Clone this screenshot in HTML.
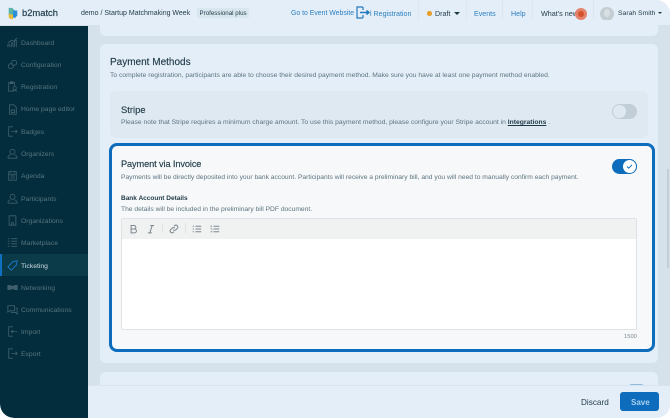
<!DOCTYPE html>
<html><head><meta charset="utf-8">
<style>
*{box-sizing:border-box;margin:0;padding:0}
html,body{width:670px;height:418px;overflow:hidden;background:#fff;font-family:"Liberation Sans",sans-serif}
#page{position:relative;width:670px;height:418px;overflow:hidden;background:#d6e2eb;border-radius:0 14px 14px 14px}
.a{position:absolute;white-space:nowrap}
#hdr{position:absolute;left:0;top:0;width:670px;height:26px;background:#e4eef8;border-bottom:1px solid #d5e2ec}
#side{position:absolute;left:0;top:26px;width:88px;height:392px;background:#032d3c;border-radius:0 0 0 14px}
.it{position:absolute;left:21px;font-size:6.800px;color:#56747f;line-height:10px;white-space:nowrap;margin-top:1px}
.ic{position:absolute;left:6.500px;width:11px;height:11px;fill:none;stroke:#3f5f6c;stroke-width:1}
.card{position:absolute;background:#e4eef8;border-radius:6px}
.nav{font-size:6.900px;line-height:10px;color:#2c7fc0}
.dk{color:#1f3a47}
.sub{font-size:6.700px;line-height:10px;color:#5d7482}
.tb{position:absolute;top:223.500px;width:10px;height:10px;fill:none;stroke:#7b888f;stroke-width:1.300}
.ttl{-webkit-text-stroke:.15px #1f3a47;color:#1f3a47;line-height:13px}
</style></head><body>
<div id="page">
<div id="hdr"></div>
<svg class="a" style="left:7px;top:7px" width="12" height="13" viewBox="0 0 14 15"><path d="M2 1h4l3 3v6H2z" fill="#57b6a8"/><path d="M7 4h5v6l-3 3-2-1z" fill="#2d8fd5"/><path d="M2 8l5 1v5H4l-2-2z" fill="#e9b93a"/></svg>
<div class="a" style="left:22px;top:7px;font-size:9.400px;line-height:12px;color:#1e3b49;-webkit-text-stroke:.2px #1e3b49">b2match</div>
<div class="a dk" style="left:81px;top:9px;font-size:7px;line-height:10px">demo / Startup Matchmaking Week</div>
<div class="a" style="left:197px;top:8px;width:52px;height:10px;background:#d8e6ee;border-radius:2px"></div>
<div class="a dk" style="left:199.500px;top:8.500px;font-size:6.200px;line-height:10px">Professional plus</div>
<div class="a nav" style="left:291px;top:9px">Go to Event Website</div>
<svg class="a" style="left:356px;top:6px" width="14" height="13" viewBox="0 0 14 13" fill="none" stroke="#2479ba" stroke-width="1.200"><path d="M7 1H1v11h6M7 1v3M7 12V9"/><path d="M4 6.500h9M10.500 4.500l2.500 2-2.500 2" stroke-width="1.500"/></svg>
<div class="a nav" style="left:370px;top:9px;font-size:7.100px">l Registration</div>
<div class="a" style="left:418px;top:0;width:1px;height:25px;background:#dbe7f1"></div>
<div class="a" style="left:427px;top:11px;width:4.500px;height:4.500px;border-radius:50%;background:#e8a02c"></div>
<div class="a dk" style="left:435px;top:9px;font-size:7.100px;line-height:10px">Draft</div>
<div class="a" style="left:454px;top:12px;border:3px solid transparent;border-top:3px solid #1f3a47"></div>
<div class="a" style="left:502px;top:0;width:1px;height:25px;background:#dbe7f1"></div>
<div class="a" style="left:466px;top:0;width:1px;height:25px;background:#dbe7f1"></div>
<div class="a nav" style="left:474px;top:9px;font-size:7.100px">Events</div>
<div class="a nav" style="left:511px;top:9px;font-size:7.100px">Help</div>
<div class="a" style="left:532px;top:0;width:1px;height:25px;background:#dbe7f1"></div>
<div class="a" style="left:593px;top:0;width:1px;height:25px;background:#dbe7f1"></div>
<div class="a dk" style="left:541px;top:9px;font-size:7.200px;line-height:10px">What's new</div>
<div class="a" style="left:575px;top:8px;width:12px;height:12px;border-radius:50%;background:#e3836b"></div>
<div class="a" style="left:578px;top:11px;width:6px;height:6px;border-radius:50%;background:#d4502f"></div>
<div class="a" style="left:600px;top:6.500px;width:14px;height:14px;border-radius:50%;background:#c3cdd2"></div>
<div class="a" style="left:604px;top:9px;width:6px;height:8px;border-radius:50%;background:#d9e0e4"></div>
<div class="a dk" style="left:618px;top:9px;font-size:6.800px;line-height:10px">Sarah Smith</div>
<div class="a" style="left:658px;top:12px;border:2.800px solid transparent;border-top:2.800px solid #1f3a47"></div>

<div id="side"></div>
<div class="a" style="left:0;top:254px;width:88px;height:22px;background:#0b3a49"></div>
<div class="a" style="left:0;top:254px;width:2px;height:22px;background:#0f6fc0"></div>
<svg class="ic" style="top:37px" viewBox="0 0 13 13"><path d="M1 12V9h2v3M5 12V7h2v5M9 12V4h2v8M1 7l4-3 3 1 4-4"/></svg>
<div class="it" style="top:38px">Dashboard</div>
<svg class="ic" style="top:59px" viewBox="0 0 13 13"><circle cx="4.500" cy="8.500" r="3"/><circle cx="8.500" cy="4.500" r="3"/></svg>
<div class="it" style="top:60px">Configuration</div>
<svg class="ic" style="top:81px" viewBox="0 0 13 13"><path d="M8 12H2V2h7v4M4 1h3v2H4z"/><circle cx="9" cy="8.500" r="2"/><path d="M6.500 12.500c.5-2 4.500-2 5 0"/></svg>
<div class="it" style="top:82px">Registration</div>
<svg class="ic" style="top:104px" viewBox="0 0 13 13"><path d="M3 1h5l3 3v8H3zM5 7h4v3H5z"/></svg>
<div class="it" style="top:104px">Home page editor</div>
<svg class="ic" style="top:126px" viewBox="0 0 13 13"><path d="M7 1H2v11h5M5 6.500h7M10 4.500l2 2-2 2"/></svg>
<div class="it" style="top:127px">Badges</div>
<svg class="ic" style="top:148px" viewBox="0 0 13 13"><circle cx="6.500" cy="4.500" r="3"/><path d="M1 12c0-3 3-4 3-4M12 12c0-3-3-4-3-4M1 12h11"/></svg>
<div class="it" style="top:149px">Organizers</div>
<svg class="ic" style="top:170px" viewBox="0 0 13 13"><path d="M2 2h9v10H2zM2 5h9M4 1v2M9 1v2M4 7h5M4 9.500h5"/></svg>
<div class="it" style="top:171px">Agenda</div>
<svg class="ic" style="top:193px" viewBox="0 0 13 13"><circle cx="6.500" cy="4.500" r="3"/><path d="M1 12c0-3 3-4 3-4M12 12c0-3-3-4-3-4M1 12h11"/></svg>
<div class="it" style="top:194px">Participants</div>
<svg class="ic" style="top:215px" viewBox="0 0 13 13"><path d="M2.500 1h8v11h-8zM5.500 9h2v3h-2z"/></svg>
<div class="it" style="top:216px">Organizations</div>
<svg class="ic" style="top:237px" viewBox="0 0 13 13"><path d="M1 2h2M5 2h7M1 5h2M5 5h7M1 8h2M5 8h7M1 11h2M5 11h7"/></svg>
<div class="it" style="top:238px">Marketplace</div>
<svg class="ic" style="top:260px;stroke:#1a7fd0" viewBox="0 0 13 13"><path d="M1 8l6-6 5-1-1 5-6 6z"/></svg>
<div class="it" style="top:261px;color:#cfdde3">Ticketing</div>
<svg class="ic" style="top:282px" viewBox="0 0 13 13"><path d="M1 4h3v5H1zM9 4h3v5H9zM4 5h5v3H4z" fill="#3f5f6c"/></svg>
<div class="it" style="top:283px">Networking</div>
<svg class="ic" style="top:304px" viewBox="0 0 13 13"><path d="M1 2h8v6H3L1 9.500zM10 5h2v7l-2-2H5V9"/></svg>
<div class="it" style="top:305px">Communications</div>
<svg class="ic" style="top:326px" viewBox="0 0 13 13"><path d="M7 1H2v11h5M12 6.500H5M7 4.500l-2 2 2 2"/></svg>
<div class="it" style="top:327px">Import</div>
<svg class="ic" style="top:348px" viewBox="0 0 13 13"><path d="M7 1H2v11h5M5 6.500h7M10 4.500l2 2-2 2"/></svg>
<div class="it" style="top:349px">Export</div>

<div class="card" style="left:100px;top:20px;width:558px;height:16px"></div>
<div class="card" style="left:100px;top:44px;width:558px;height:319px"></div>
<div class="a ttl" style="left:110px;top:56px;font-size:10px">Payment Methods</div>
<div class="a sub" style="left:110px;top:71px;font-size:6.750px">To complete registration, participants are able to choose their desired payment method. Make sure you have at least one payment method enabled.</div>
<div class="a" style="left:110px;top:91px;width:538px;height:47px;background:#dfe9f2;border-radius:6px"></div>
<div class="a ttl" style="left:121px;top:103px;font-size:9.400px">Stripe</div>
<div class="a sub" style="left:121px;top:118px;font-size:6.750px">Please note that Stripe requires a minimum charge amount. To use this payment method, please configure your Stripe account in <b style="color:#1f3a47;text-decoration:underline">Integrations</b> .</div>
<div class="a" style="left:612px;top:104px;width:25px;height:15px;border-radius:8px;background:#c1ced7"></div>
<div class="a" style="left:613px;top:105px;width:13px;height:13px;border-radius:50%;background:#dfe9f2"></div>

<div class="a" style="left:109px;top:143px;width:546px;height:209px;background:#f6f8f9;border:3px solid #0d6cbc;border-radius:8px"></div>
<div class="a ttl" style="left:121px;top:158px;font-size:9.200px;letter-spacing:-.1px">Payment via Invoice</div>
<div class="a sub" style="left:121px;top:173px">Payments will be directly deposited into your bank account. Participants will receive a preliminary bill, and you will need to manually confirm each payment.</div>
<div class="a" style="left:612px;top:159px;width:25px;height:15px;border-radius:8px;background:#0d6cbc"></div>
<div class="a" style="left:623px;top:160px;width:13px;height:13px;border-radius:50%;background:#fff"></div>
<svg class="a" style="left:626px;top:163px" width="7" height="7" viewBox="0 0 7 7"><path d="M1 3.500l1.700 1.700L6 1.800" fill="none" stroke="#0d6cbc" stroke-width="1"/></svg>
<div class="a" style="left:121px;top:194px;font-size:6.500px;line-height:10px;color:#1f3a47;font-weight:bold">Bank Account Details</div>
<div class="a sub" style="left:121px;top:205px">The details will be included in the preliminary bill PDF document.</div>
<div class="a" style="left:121px;top:218px;width:516px;height:112px;background:#fff;border:1px solid #dfe3e5;border-radius:2px"></div>
<div class="a" style="left:122px;top:219px;width:514px;height:20px;background:#f0f1f1"></div>
<svg class="tb" style="left:127.500px" viewBox="0 0 13 13"><path d="M4 2h4a2.200 2.200 0 010 4.500H4zM4 6.500h4.500a2.500 2.500 0 010 5H4z"/></svg>
<svg class="tb" style="left:146px" viewBox="0 0 13 13"><path d="M5.500 2h5M2.500 11.500h5M8 2L5 11.500"/></svg>
<div class="a" style="left:162px;top:223px;width:1px;height:10px;background:#dfe1e2"></div>
<svg class="tb" style="left:169px" viewBox="0 0 13 13"><path d="M5.500 7.500a2.500 2.500 0 003.500 0l2-2A2.500 2.500 0 007.500 2L6.500 3M7.500 5.500a2.500 2.500 0 00-3.500 0l-2 2A2.500 2.500 0 005.500 11l1-1"/></svg>
<div class="a" style="left:185px;top:223px;width:1px;height:10px;background:#dfe1e2"></div>
<svg class="tb" style="left:192px" viewBox="0 0 13 13"><path d="M4.500 3H12M4.500 6.500H12M4.500 10H12M1 3h1.500M1 6.500h1.500M1 10h1.500"/></svg>
<svg class="tb" style="left:210px" viewBox="0 0 13 13"><path d="M4.500 3H12M4.500 6.500H12M4.500 10H12M1.500 2v2M1 6.500h2M1 10h2"/></svg>
<div class="a" style="left:624px;top:333px;font-size:5.800px;line-height:8px;color:#7b8a93">1500</div>

<div class="card" style="left:100px;top:372px;width:558px;height:30px"></div>
<div class="a" style="left:628px;top:384px;width:17px;height:4px;border-radius:8px 8px 0 0;background:#8fbbe0"></div>
<div class="a" style="left:88px;top:384.500px;width:582px;height:34px;background:#e4eef8;border-top:1px solid #d8e4ee"></div>
<div class="a" style="left:581px;top:397px;font-size:8.200px;line-height:11px;color:#1f3a47">Discard</div>
<div class="a" style="left:620px;top:392px;width:39px;height:18.500px;border-radius:3px;background:#0d6cbc"></div>
<div class="a" style="left:631px;top:397px;font-size:8px;line-height:11px;font-weight:bold;color:#a9d1f0">Save</div>
<div class="a" style="left:667px;top:169px;width:2px;height:99px;background:#c3ced6"></div>
</div>
</body></html>
